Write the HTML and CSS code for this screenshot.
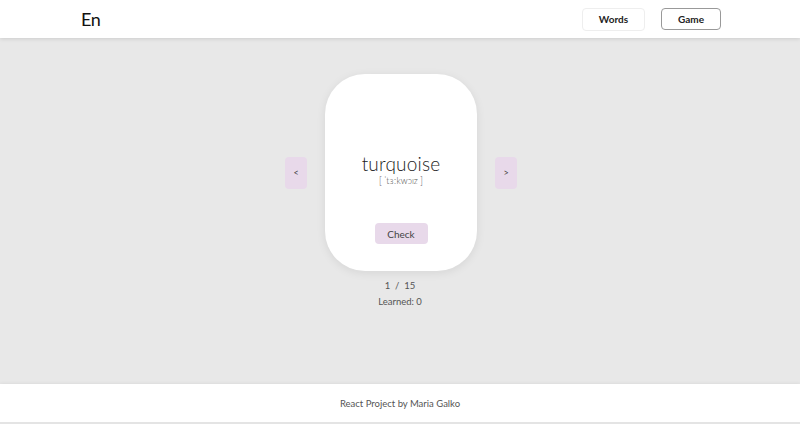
FILE: index.html
```html
<!DOCTYPE html>
<html lang="en">
<head>
<meta charset="utf-8">
<title>En</title>
<link rel="stylesheet" href="styles.css">
</head>
<body>
<div class="page">
  <header class="header">
    <div class="logo">En</div>
    <nav class="nav">
      <button class="nav-btn nav-btn--words">Words</button>
      <button class="nav-btn nav-btn--game">Game</button>
    </nav>
  </header>
  <main class="main">
    <div class="slider">
      <button class="arrow">&lt;</button>
      <div class="card">
        <div class="word">turquoise</div>
        <div class="transcription">[ ˈtɜːkwɔɪz ]</div>
        <button class="check">Check</button>
      </div>
      <button class="arrow">&gt;</button>
    </div>
    <div class="counter">1 &nbsp;/&nbsp; 15</div>
    <div class="learned">Learned: 0</div>
  </main>
  <footer class="footer">React Project by Maria Galko</footer>
</div>
</body>
</html>
```

FILE: styles.css
```css
* { box-sizing: border-box; }
html, body { margin: 0; padding: 0; }
body {
  font-family: Lato, "Open Sans", sans-serif;
  color: #333;
  background: #e8e8e8;
}
.page {
  height: 424px;
  display: flex;
  flex-direction: column;
}
.header {
  height: 38px;
  background: #fff;
  display: flex;
  align-items: center;
  justify-content: space-between;
  padding: 0 79px 0 81px;
  box-shadow: 0 1px 4px rgba(0,0,0,0.12);
  position: relative;
  z-index: 1;
}
.logo {
  font-size: 18px;
  font-weight: 400;
  color: #111;
  letter-spacing: -0.5px;
}
.nav { display: flex; gap: 16px; }
.nav-btn {
  font-family: inherit;
  font-size: 10px;
  font-weight: 700;
  background: #fff;
  color: #222;
  border-radius: 4px;
  height: 23px;
  cursor: pointer;
}
.nav-btn--words { width: 63px; border: 1px solid #eee; }
.nav-btn--game { width: 60px; border: 1px solid #999; height: 22px; }
.main {
  flex: 1;
  display: flex;
  flex-direction: column;
  align-items: center;
  padding-top: 36px;
}
.slider {
  display: flex;
  align-items: center;
  gap: 18px;
  margin-left: 2px;
}
.arrow {
  width: 22px;
  height: 32px;
  border: none;
  border-radius: 4px;
  background: #e8d9ea;
  color: #444;
  font-family: inherit;
  font-size: 9px;
  padding: 0;
}
.card {
  width: 152px;
  height: 197px;
  background: #fff;
  border-radius: 40px;
  box-shadow: 0 2px 10px rgba(0,0,0,0.08);
  display: flex;
  flex-direction: column;
  align-items: center;
  padding-top: 79px;
}
.word {
  font-size: 19px;
  font-weight: 300;
  line-height: 22px;
  color: #222;
  letter-spacing: 0.2px;
}
.transcription {
  font-size: 9px;
  font-weight: 300;
  line-height: 12px;
  color: #555;
}
.check {
  margin-top: 36px;
  width: 53px;
  height: 21px;
  border: none;
  border-radius: 4px;
  background: #e8d9ea;
  color: #444;
  font-family: inherit;
  font-size: 10px;
  padding: 0;
}
.counter {
  margin-top: 9px;
  font-size: 9.5px;
  line-height: 12px;
  color: #555;
}
.learned {
  margin-top: 4px;
  font-size: 9.5px;
  line-height: 12px;
  color: #555;
}
.footer {
  height: 40px;
  background: #fff;
  display: flex;
  align-items: center;
  justify-content: center;
  font-size: 9.5px;
  color: #555;
  border-bottom: 2px solid #e4e4e4;
  box-shadow: 0 -1px 3px rgba(0,0,0,0.05);
}
```
